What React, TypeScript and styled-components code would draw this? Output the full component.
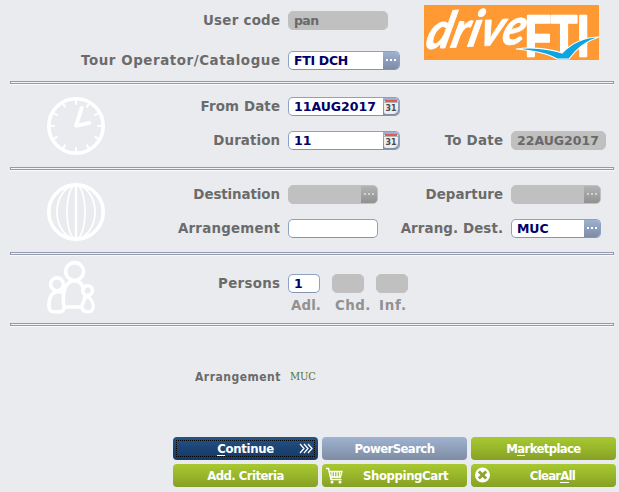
import React from 'react';
import styled, { createGlobalStyle, css } from 'styled-components';

const GlobalStyle = createGlobalStyle`
  body { margin: 0; background: #eaebef; }
  *, *::before, *::after { box-sizing: border-box; }
`;

const tahoma = css`
  font-family: 'DejaVu Sans', sans-serif;
  font-stretch: condensed;
  font-weight: bold;
`;

const verdana = css`
  font-family: 'DejaVu Sans', sans-serif;
  font-stretch: normal;
  font-weight: bold;
`;

const Page = styled.main`
  ${tahoma}
  width: 619px;
  height: 492px;
  overflow: hidden;
  background: #eaebef;
  color: #6b6b6b;
`;

const Rule = styled.hr`
  width: 604px;
  height: 3px;
  margin: 0 0 0 10px;
  border: 1px solid #9299aa;
  background: #f4f5f9;
  box-shadow: 0 1px 0 #fafafd;
`;

const Header = styled.header`
  display: flex;
  height: 81px;
`;

const Section = styled.section<{ $height: number }>`
  display: flex;
  height: ${(p) => p.$height}px;
`;

const IconCell = styled.div<{ $top: number }>`
  flex: none;
  width: 60px;
  margin-left: 46px;
  padding-top: ${(p) => p.$top}px;
  svg { display: block; }
`;

const Fields = styled.div<{ $top: number; $gap?: number }>`
  display: flex;
  flex-direction: column;
  gap: ${(p) => p.$gap ?? 15}px;
  padding-top: ${(p) => p.$top}px;
  width: 513px;
`;

const HeaderFields = styled(Fields)`
  width: 424px;
`;

const FieldRow = styled.div<{ $labelWidth?: number }>`
  display: grid;
  grid-template-columns: ${(p) => p.$labelWidth ?? 174}px 112px 95px auto;
  column-gap: 8px;
  justify-content: start;
  height: 19px;
`;

const Label = styled.label<{ $spacing: number }>`
  ${verdana}
  font-size: 13.4px;
  line-height: 19px;
  letter-spacing: ${(p) => p.$spacing}px;
  margin-right: ${(p) => -p.$spacing}px;
  text-align: right;
  white-space: nowrap;
`;

const SideLabel = styled(Label)`
  margin-left: -20px;
`;

const Box = styled.div<{ $width: number; $disabled?: boolean }>`
  display: flex;
  flex: none;
  width: ${(p) => p.$width}px;
  height: 19px;
  overflow: hidden;
  border: 1px solid ${(p) => (p.$disabled ? '#c0c0c0' : '#8ba2c5')};
  border-bottom-color: ${(p) => (p.$disabled ? '#c0c0c0' : '#8594b0')};
  border-radius: 5px;
  background: ${(p) => (p.$disabled ? '#c0c0c0' : '#fff')};
  color: ${(p) => (p.$disabled ? '#696969' : '#000066')};
`;

const Value = styled.span<{ $spacing?: number }>`
  ${verdana}
  flex: 1;
  padding-left: 5px;
  font-size: 12.5px;
  line-height: 17px;
  letter-spacing: ${(p) => p.$spacing ?? 0}px;
  white-space: nowrap;
`;

const Picker = styled.span<{ $disabled?: boolean }>`
  display: flex;
  flex: none;
  width: 17px;
  height: 19px;
  margin: -1px -1px -1px 0;
  background: ${(p) =>
    p.$disabled ? 'linear-gradient(#b5b5b5, #8f8f8f)' : 'linear-gradient(#9fb3d2, #7c89a3)'};
  svg { display: block; }
`;

const PersonBoxes = styled.div`
  display: flex;
  gap: 12px;
`;

const PersonCaptions = styled.div`
  ${verdana}
  display: flex;
  height: 19px;
  margin: -12px 0 0 185px;
  color: #919191;
  font-size: 13.4px;
  line-height: 19px;
`;

const Caption = styled.span<{ $width: number; $spacing: number }>`
  width: ${(p) => p.$width}px;
  letter-spacing: ${(p) => p.$spacing}px;
`;

const LogoCell = styled.div`
  padding-top: 5px;
  svg { display: block; overflow: visible; }
`;

const Summary = styled.div`
  display: flex;
  align-items: center;
  gap: 9px;
  height: 102px;
  padding: 0 0 0 195px;
  font-size: 12px;
  line-height: 14px;
  letter-spacing: 0.5px;
`;

const Code = styled.span`
  color: #58702f;
  font: normal 11px/14px 'DejaVu Serif', serif;
  font-stretch: condensed;
  letter-spacing: -0.1px;
`;

const Actions = styled.footer`
  display: grid;
  grid-template-columns: repeat(3, 145px);
  grid-auto-rows: 23px;
  gap: 4px;
  padding: 9px 0 0 173px;
`;

const tones = {
  green: 'linear-gradient(#a8c832, #98b62a 50%, #86a026)',
  blue: 'linear-gradient(#245486, #1b4474 50%, #153963)',
  slate: 'linear-gradient(#9fb3d0, #8e9fb9 50%, #7e8da5)',
};

const Action = styled.button<{ $tone: keyof typeof tones; $spacing: number }>`
  ${tahoma}
  display: grid;
  grid-template-columns: 20px 1fr 20px;
  align-items: center;
  padding: 0 4px;
  border: 0;
  border-radius: 4px;
  background: ${(p) => tones[p.$tone]};
  color: #fff;
  font-size: 13px;
  line-height: 23px;
  letter-spacing: ${(p) => p.$spacing}px;
  white-space: nowrap;
  outline: ${(p) => (p.$tone === 'blue' ? '1px dotted #000' : 'none')};
  outline-offset: -4px;
  svg { display: block; }
`;

const ActionText = styled.span<{ $shift?: number }>`
  grid-column: 2;
  grid-row: 1;
  justify-self: center;
  padding-left: ${(p) => Math.max(p.$shift ?? 0, 0)}px;
`;

const ActionIcon = styled.span<{ $end?: boolean }>`
  grid-column: ${(p) => (p.$end ? 3 : 1)};
  grid-row: 1;
`;

const Key = styled.span`
  border-bottom: 1px solid currentColor;
  display: inline-block;
  line-height: 13px;
`;

const Dots = ({ disabled }: { disabled?: boolean }) => (
  <svg width="17" height="19">
    <path d="M3 8h2v2H3zM7 8h2v2H7zM11 8h2v2h-2z" fill={disabled ? '#d2d2d2' : '#fff'} />
  </svg>
);

const Calendar = () => (
  <svg width="17" height="19">
    <path d="M1 4h14v9q-1 3-4 4H3q-2 0-2-2z" fill="#eeeeee" />
    <path d="M15 12q-1 4-5 5 3 0 5-2z" fill="#c3c3c3" />
    <path d="M2 3h12v2H2z" fill="#dc5c57" />
    <path d="M1 5h14v1H1z" fill="#b9b4b6" />
    <text x="2.5" y="13.5" fontFamily="DejaVu Sans" fontWeight="bold" fontSize="9.5" textLength="11" lengthAdjust="spacingAndGlyphs" fill="#494949">31</text>
  </svg>
);

const ClockIcon = () => (
  <svg width="60" height="60" fill="none" stroke="#fff">
    <circle cx="30" cy="30" r="27.2" strokeWidth="3.6" />
    {Array.from({ length: 12 }, (_, i) => (
      <path key={i} d="M30 4v4.7" strokeWidth="2" transform={`rotate(${i * 30} 30 30)`} />
    ))}
    <path d="M35.8 11.7L30 29.8L43.5 26.9" strokeWidth="3.8" strokeLinecap="round" strokeLinejoin="round" />
  </svg>
);

const GlobeIcon = () => (
  <svg width="60" height="60" fill="none" stroke="#fff">
    <circle cx="30" cy="30" r="27.2" strokeWidth="3.6" />
    <ellipse cx="30" cy="30" rx="19" ry="26.5" strokeWidth="1.8" />
    <ellipse cx="30" cy="30" rx="9" ry="27" strokeWidth="1.7" />
    <path d="M30 3v54" strokeWidth="2.3" />
  </svg>
);

const PeopleIcon = () => (
  <svg width="60" height="60" fill="none" stroke="#fff" strokeWidth="3.6" strokeLinejoin="round">
    <circle cx="28.6" cy="12.5" r="8.9" />
    <circle cx="11" cy="25.3" r="6.4" />
    <circle cx="41.6" cy="31.6" r="4.9" />
    <path d="M18.3 48C17 44 17 35 18.5 30.5C20 26 22.5 23 26 22H31C34.5 23 36.5 26 38.3 31.2M17.3 48H36" />
    <path d="M17.7 34C15 31.8 7.5 31.8 4.8 37C2.8 41 2.8 45 3 48Q3.4 52.8 8 52.8H13Q18.8 52.8 18.3 46.5" />
    <path d="M41.6 37C38.5 40 36 44 36 47.8C36 51 38 52.8 41.7 52.8C45.3 52.8 47.3 51 47.3 47.3C47.3 44 44.6 39.5 41.6 37zM39.2 35L37.2 45" strokeWidth="3.2" />
  </svg>
);

const Logo = () => (
  <svg width="175" height="55">
    <path d="M0 0h175v55H0z" fill="#ff9933" />
    <g fill="#fff" stroke="#fff" strokeLinejoin="round">
      <g transform="translate(0 44) rotate(-3) skewX(-17)">
        <text fontFamily="Lato" fontStyle="italic" fontWeight="bold" fontSize="50" strokeWidth=".8" textLength="99" lengthAdjust="spacingAndGlyphs">drive</text>
      </g>
      <text x="101" y="51" fontFamily="Liberation Sans" fontWeight="bold" fontSize="57" strokeWidth="2.6" textLength="64" lengthAdjust="spacingAndGlyphs">FTI</text>
    </g>
    <path d="M92 44C105 42 124 43 138 48C149 37 160 32 175 32C162 36 153 43 145 54H133C123 48 110 46 92 44z" fill="#0ca5e2" stroke="#fff" strokeWidth="1.2" />
  </svg>
);

const Chevrons = () => (
  <svg width="20" height="13" fill="none" stroke="#fff" strokeWidth="1.3">
    <path d="M6 2l4 4.5L6 11M10 2l4 4.5L10 11M14 2l4 4.5L14 11" />
  </svg>
);

const Cart = () => (
  <svg width="17" height="17" fill="none" stroke="#fff">
    <path d="M0 1.5h2.5L5 12.5h10.5" strokeWidth="1.5" />
    <path d="M3 4.5h13L14.5 10H4.5M6 4v7M8.5 4v7M11 4v7M13.5 4v7" strokeWidth="1.3" />
    <circle cx="6" cy="15" r="1.5" fill="#fff" stroke="none" />
    <circle cx="14" cy="15" r="1.5" fill="#fff" stroke="none" />
  </svg>
);

const Cross = () => (
  <svg width="16" height="17">
    <circle cx="7.5" cy="8" r="7.5" fill="#fff" />
    <path d="M3.9 4.4l7.2 7.2M11.1 4.4l-7.2 7.2" stroke="#8ba42c" strokeWidth="2.8" />
  </svg>
);

type FieldProps = {
  width: number;
  value?: string;
  spacing?: number;
  disabled?: boolean;
  picker?: 'dots' | 'calendar';
};

const Field = ({ width, value, spacing, disabled, picker }: FieldProps) => (
  <Box $width={width} $disabled={disabled}>
    <Value $spacing={spacing}>{value}</Value>
    {picker && (
      <Picker $disabled={disabled}>
        {picker === 'dots' ? <Dots disabled={disabled} /> : <Calendar />}
      </Picker>
    )}
  </Box>
);

export default function App() {
  return (
    <Page>
      <GlobalStyle />
      <Header>
        <HeaderFields $top={11} $gap={21}>
          <FieldRow $labelWidth={280}>
            <Label $spacing={0.25}>User code</Label>
            <Field width={100} value="pan" spacing={-0.6} disabled />
          </FieldRow>
          <FieldRow $labelWidth={280}>
            <Label $spacing={0.57}>Tour Operator/Catalogue</Label>
            <Field width={112} value="FTI DCH" spacing={-0.3} picker="dots" />
          </FieldRow>
        </HeaderFields>
        <LogoCell><Logo /></LogoCell>
      </Header>
      <Rule />
      <Section $height={83}>
        <IconCell $top={12}><ClockIcon /></IconCell>
        <Fields $top={13}>
          <FieldRow>
            <Label $spacing={0.15}>From Date</Label>
            <Field width={112} value="11AUG2017" picker="calendar" />
          </FieldRow>
          <FieldRow>
            <Label $spacing={0.1}>Duration</Label>
            <Field width={112} value="11" picker="calendar" />
            <SideLabel $spacing={0.25}>To Date</SideLabel>
            <Field width={95} value="22AUG2017" disabled />
          </FieldRow>
        </Fields>
      </Section>
      <Rule />
      <Section $height={82}>
        <IconCell $top={12}><GlobeIcon /></IconCell>
        <Fields $top={15}>
          <FieldRow>
            <Label $spacing={-0.08}>Destination</Label>
            <Field width={90} disabled picker="dots" />
            <SideLabel $spacing={0.05}>Departure</SideLabel>
            <Field width={90} disabled picker="dots" />
          </FieldRow>
          <FieldRow>
            <Label $spacing={0.23}>Arrangement</Label>
            <Field width={90} />
            <SideLabel $spacing={0.1}>Arrang. Dest.</SideLabel>
            <Field width={90} value="MUC" spacing={-0.1} picker="dots" />
          </FieldRow>
        </Fields>
      </Section>
      <Rule />
      <Section $height={68}>
        <IconCell $top={4}><PeopleIcon /></IconCell>
        <Fields $top={19}>
          <FieldRow>
            <Label $spacing={0.3}>Persons</Label>
            <PersonBoxes>
              <Field width={32} value="1" />
              <Field width={32} disabled />
              <Field width={32} disabled />
            </PersonBoxes>
          </FieldRow>
          <PersonCaptions>
            <Caption $width={44} $spacing={0.1}>Adl.</Caption>
            <Caption $width={44} $spacing={0.4}>Chd.</Caption>
            <Caption $width={40} $spacing={0.8}>Inf.</Caption>
          </PersonCaptions>
        </Fields>
      </Section>
      <Rule />
      <Summary>
        <span>Arrangement</span>
        <Code>MUC</Code>
      </Summary>
      <Actions>
        <Action $tone="blue" $spacing={-0.3}>
          <ActionText><Key>C</Key>ontinue</ActionText>
          <ActionIcon $end><Chevrons /></ActionIcon>
        </Action>
        <Action $tone="slate" $spacing={-0.6}><ActionText>PowerSearch</ActionText></Action>
        <Action $tone="green" $spacing={-0.65}><ActionText>M<Key>a</Key>rketplace</ActionText></Action>
        <Action $tone="green" $spacing={-0.55}><ActionText>Add. Criteria</ActionText></Action>
        <Action $tone="green" $spacing={-0.4}>
          <ActionIcon><Cart /></ActionIcon>
          <ActionText $shift={17}>ShoppingCart</ActionText>
        </Action>
        <Action $tone="green" $spacing={-0.75}>
          <ActionIcon><Cross /></ActionIcon>
          <ActionText $shift={18}>Clear<Key>A</Key>ll</ActionText>
        </Action>
      </Actions>
    </Page>
  );
}
